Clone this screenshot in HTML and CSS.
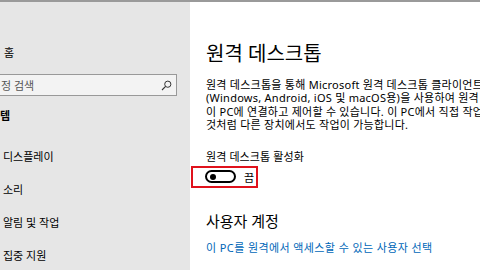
FILE: index.html
```html
<!DOCTYPE html>
<html lang="ko">
<head>
<meta charset="utf-8">
<link rel="stylesheet" href="styles.css">
</head>
<body>
<div class="window">
  <aside class="sidebar">
    <div class="nav-home">홈</div>
    <div class="search">
      <span class="search-text">정 검색</span>
      <svg class="search-icon" width="11" height="11" viewBox="0 0 11 11"><circle cx="6.8" cy="4.2" r="3.1" fill="none" stroke="#333" stroke-width="1"/><line x1="4.6" y1="6.4" x2="1" y2="10" stroke="#333" stroke-width="1.1"/></svg>
    </div>
    <div class="nav-section">템</div>
    <ul class="nav-list">
      <li>디스플레이</li>
      <li>소리</li>
      <li>알림 및 작업</li>
      <li>집중 지원</li>
    </ul>
  </aside>
  <main class="content">
    <h1 class="title">원격 데스크톱</h1>
    <p class="desc">
      <span class="line">원격 데스크톱을 통해 Microsoft 원격 데스크톱 클라이언트를</span>
      <span class="line">(Windows, Android, iOS 및 macOS용)을 사용하여 원격 장치에서</span>
      <span class="line">이 PC에 연결하고 제어할 수 있습니다. 이 PC에서 직접 작업하는</span>
      <span class="line">것처럼 다른 장치에서도 작업이 가능합니다.</span>
    </p>
    <div class="setting-label">원격 데스크톱 활성화</div>
    <div class="toggle-box">
      <span class="toggle"><span class="knob"></span></span>
      <span class="toggle-state">끔</span>
    </div>
    <h2 class="subtitle">사용자 계정</h2>
    <a class="link">이 PC를 원격에서 액세스할 수 있는 사용자 선택</a>
  </main>
</div>
</body>
</html>
```
FILE: styles.css
```css
html, body {
  margin: 0;
  padding: 0;
  width: 480px;
  height: 270px;
  overflow: hidden;
  background: #fff;
  font-family: "Noto Sans", "Noto Sans CJK KR", sans-serif;
  color: #000;
}
.window {
  display: flex;
  height: 268px;
  border-top: 2px solid #9a9a9a;
}
.sidebar {
  width: 190px;
  flex: none;
  background: #e6e6e6;
  font-size: 11px;
}
.nav-home {
  margin-top: 43px;
  padding-left: 4px;
  line-height: 16px;
}
.search {
  margin-top: 13px;
  width: 172px;
  height: 20px;
  border: 1px solid #999;
  border-left: none;
  background: #f3f3f3;
  display: flex;
  align-items: center;
  justify-content: space-between;
  padding-right: 4px;
  box-sizing: content-box;
}
.search-text {
  color: #555;
  padding-left: 1px;
}
.nav-section {
  margin-top: 12px;
  font-weight: 700;
  line-height: 16px;
}
.nav-list {
  list-style: none;
  margin: 25px 0 0;
  padding: 0 0 0 3px;
  display: flex;
  flex-direction: column;
  gap: 17px;
}
.nav-list li {
  line-height: 16px;
}
.content {
  flex: 1;
  padding-left: 16px;
  white-space: nowrap;
  overflow: hidden;
}
.title {
  margin: 39px 0 0;
  font-size: 20px;
  font-weight: 400;
  line-height: 26px;
}
.desc {
  margin: 11px 0 0;
  font-size: 11px;
  letter-spacing: 0.25px;
  line-height: 13.4px;
}
.line {
  display: block;
}
.setting-label {
  margin-top: 18px;
  font-size: 11px;
  letter-spacing: 0.1px;
  line-height: 14px;
}
.toggle-box {
  margin-top: 2px;
  margin-left: -15px;
  width: 67px;
  height: 22px;
  border: 2px solid #e0121c;
  box-sizing: border-box;
  display: flex;
  align-items: center;
  gap: 8px;
  padding-left: 12px;
}
.toggle {
  width: 31px;
  height: 13px;
  border: 2px solid #000;
  border-radius: 8px;
  box-sizing: border-box;
  display: flex;
  align-items: center;
  padding-left: 3px;
}
.knob {
  width: 6px;
  height: 6px;
  border-radius: 50%;
  background: #000;
}
.toggle-state {
  font-size: 11px;
}
.subtitle {
  margin: 23px 0 0;
  font-size: 15px;
  font-weight: 400;
  line-height: 20px;
}
.link {
  display: block;
  margin-top: 10px;
  font-size: 11px;
  letter-spacing: 0.4px;
  color: #0067b8;
  line-height: 14px;
}
```
